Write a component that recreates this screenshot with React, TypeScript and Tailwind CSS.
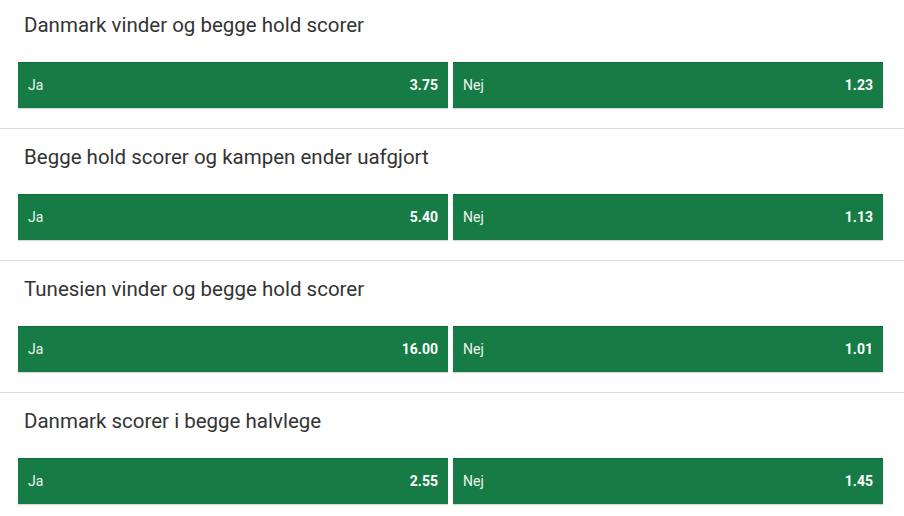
import React from "react";

const markets = [
  { title: "Danmark vinder og begge hold scorer", ja: "3.75", nej: "1.23" },
  { title: "Begge hold scorer og kampen ender uafgjort", ja: "5.40", nej: "1.13" },
  { title: "Tunesien vinder og begge hold scorer", ja: "16.00", nej: "1.01" },
  { title: "Danmark scorer i begge halvlege", ja: "2.55", nej: "1.45" },
];

function Btn({ label, odds }: { label: string; odds: string }) {
  return (
    <button className="flex-1 h-[46px] flex items-center justify-between px-[10px] bg-[#177b45] border-t border-t-[#0f6a39] shadow-[0_1px_1px_rgba(0,0,0,0.15)] text-white">
      <span className="text-[14px] text-[#eef5f0]">{label}</span>
      <span className="text-[14px] font-bold">{odds}</span>
    </button>
  );
}

export default function App() {
  return (
    <div className="w-[904px] h-[516px] bg-white overflow-hidden" style={{ fontFamily: "Roboto, 'Liberation Sans', sans-serif" }}>
      <div className="-mt-[3px]">
        {markets.map((m, i) => (
          <div key={i} className={i > 0 ? "border-t border-[#dcdcdc]" : ""}>
            <div className="pt-[16px] pb-[20px] pl-[18px] pr-[21px]">
              <div className="pl-[6px] h-[24px] leading-[24px] text-[20.5px] text-[#333333]">{m.title}</div>
              <div className="mt-[25px] flex gap-[5px]">
                <Btn label="Ja" odds={m.ja} />
                <Btn label="Nej" odds={m.nej} />
              </div>
            </div>
          </div>
        ))}
      </div>
    </div>
  );
}
